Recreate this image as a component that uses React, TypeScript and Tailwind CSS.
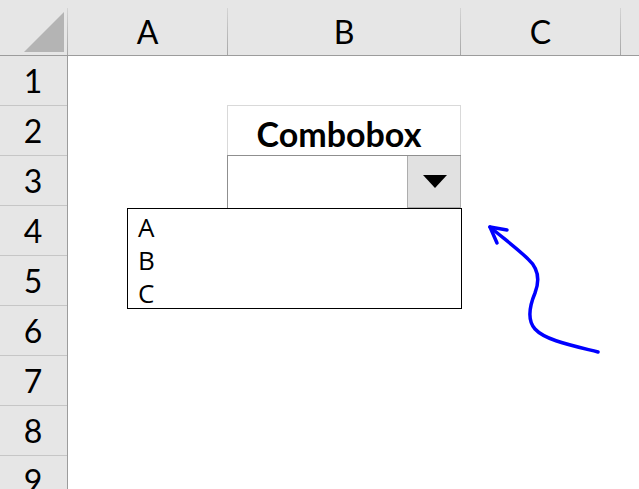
// Excel sheet with an open combobox dropdown
const sheetFont = { fontFamily: 'Lato, "Liberation Sans", sans-serif' };

function HeaderSep() {
  return <div className="w-px mt-2 self-stretch bg-gradient-to-b from-[#d4d4d4] to-[#a6a6a6]" />;
}

function ColHeader({ label, width }: { label: string; width: string }) {
  return (
    <div className={`${width} pt-2 flex items-center justify-center text-[32px] text-black`}>
      {label}
    </div>
  );
}

export default function App() {
  const rows = [1, 2, 3, 4, 5, 6, 7, 8, 9];

  return (
    <main className="relative w-[639px] h-[489px] overflow-hidden bg-white" style={sheetFont}>
      {/* column headers */}
      <div className="flex h-[56px] bg-[#e6e6e6] border-b border-[#9c9c9c]">
        <div className="w-[67px] flex items-start justify-start">
          <svg width="67" height="55" viewBox="0 0 67 55">
            <polygon points="64,12 64,52 24,52" fill="#b4b4b4" />
          </svg>
        </div>
        <HeaderSep />
        <ColHeader label="A" width="w-[159px]" />
        <HeaderSep />
        <ColHeader label="B" width="w-[232px]" />
        <HeaderSep />
        <ColHeader label="C" width="w-[159px]" />
        <HeaderSep />
        <div className="flex-1" />
      </div>

      <div className="flex">
        {/* row headers */}
        <div className="w-[68px] bg-[#e6e6e6] border-r border-[#9c9c9c] flex flex-col">
          {rows.map((r) => (
            <div
              key={r}
              className="h-[50px] shrink-0 border-b border-[#c6c6c6] flex items-center justify-center text-[32px] text-black pr-px"
            >
              {r}
            </div>
          ))}
        </div>

        {/* sheet */}
        <div className="relative flex-1">
          <div className="ml-[159px] mt-[49px] w-[234px]">
            <div className="h-[50px] border border-b-0 border-[#d9d9d9] flex items-end justify-center pb-[4px] pr-[10px] text-[34px] font-bold text-black leading-none">
              Combobox
            </div>
            <div className="h-[53px] flex border-t border-l border-[#8f8f8f] bg-white">
              <div className="flex-1" />
              <div className="w-[54px] border border-t-0 border-[#adadad] bg-[#e1e1e1] flex items-center justify-center pl-px">
                <svg width="24" height="13" viewBox="0 0 24 13">
                  <polygon points="0,0 24,0 12,13" fill="#000" />
                </svg>
              </div>
            </div>
          </div>

          {/* dropdown list */}
          <div
            className="absolute left-[59px] top-[152px] w-[335px] h-[101px] border border-black bg-white pl-[10px] pt-[2px] text-[26px] leading-[33px] text-black"
            style={{ fontFamily: '"Open Sans", "Noto Sans", sans-serif' }}
          >
            <div>A</div>
            <div>B</div>
            <div>C</div>
          </div>
        </div>
      </div>

      {/* hand drawn arrow */}
      <svg className="absolute left-0 top-0 pointer-events-none" width="639" height="489" viewBox="0 0 639 489">
        <path
          d="M598 352 C570 345 545 340 535 329 C527 320 530 305 535 293 C540 280 538 268 528 259 C518 249 503 238 490 227"
          fill="none"
          stroke="#0000ff"
          strokeWidth="3.5"
          strokeLinecap="round"
        />
        <path d="M507 230 L490 227 L497 243" fill="none" stroke="#0000ff" strokeWidth="3.5" strokeLinecap="round" strokeLinejoin="round" />
      </svg>
    </main>
  );
}
